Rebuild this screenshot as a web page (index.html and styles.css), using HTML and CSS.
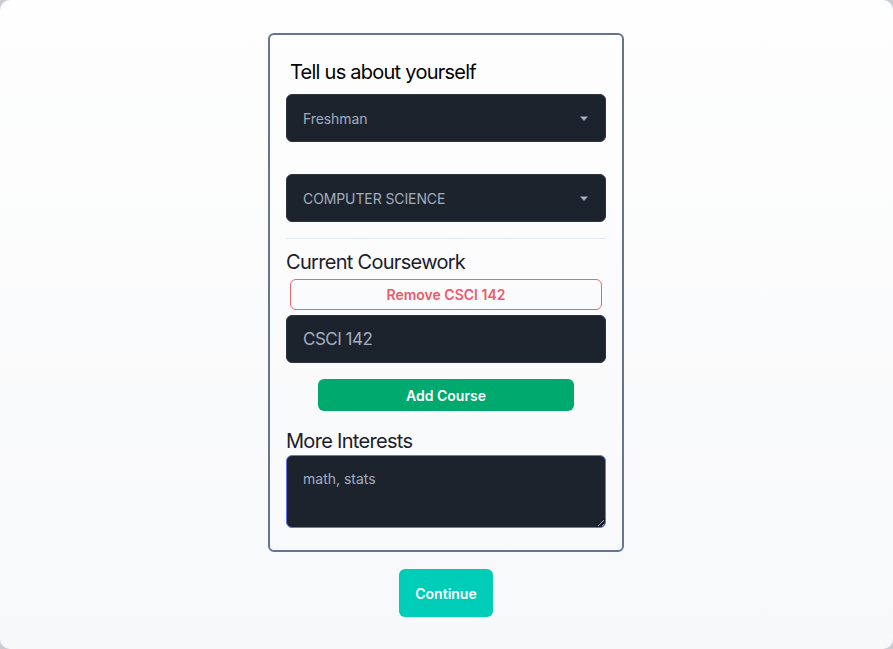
FILE: index.html
```html
<!DOCTYPE html>
<html lang="en">
<head>
<meta charset="utf-8">
<title>Tell us about yourself</title>
<link rel="stylesheet" href="styles.css">
</head>
<body>
<div class="app">
  <form class="card">
    <h2 class="title">Tell us about yourself</h2>
    <div class="select">
      <span class="select-value">Freshman</span>
      <svg class="caret" width="10" height="6" viewBox="0 0 10 6"><path d="M1 0.5h8L5 5z" fill="#a0aec0"/></svg>
    </div>
    <div class="select second">
      <span class="select-value">COMPUTER SCIENCE</span>
      <svg class="caret" width="10" height="6" viewBox="0 0 10 6"><path d="M1 0.5h8L5 5z" fill="#a0aec0"/></svg>
    </div>
    <hr class="divider">
    <h3 class="section">Current Coursework</h3>
    <button type="button" class="btn-remove">Remove CSCI 142</button>
    <input class="course-input" type="text" value="CSCI 142">
    <div class="add-row"><button type="button" class="btn-add">Add Course</button></div>
    <h3 class="section interests">More Interests</h3>
    <textarea class="interests-box">math, stats</textarea>
  </form>
  <button type="button" class="btn-continue">Continue</button>
</div>
</body>
</html>
```
FILE: styles.css
```css
html, body {
  margin: 0;
  padding: 0;
  height: 100%;
  background: #c9ccd1;
}
.app {
  box-sizing: border-box;
  height: 649px;
  border-radius: 10px;
  background: linear-gradient(#fefefe, #f7f8fa);
  display: flex;
  flex-direction: column;
  align-items: center;
  padding-top: 33px;
  font-family: Inter, "Noto Sans", sans-serif;
  overflow: hidden;
}
.card {
  box-sizing: border-box;
  width: 356px;
  margin-right: 1px;
  border: 2px solid #66758e;
  border-radius: 6px;
  padding: 23px 16px 22px;
  display: flex;
  flex-direction: column;
}
.title {
  margin: 0 0 8px 4px;
  font-size: 20px;
  line-height: 28px;
  font-weight: 400;
  letter-spacing: -0.75px;
  color: #000;
}
.select {
  box-sizing: border-box;
  height: 48px;
  border-radius: 6px;
  background: #1d232c;
  border: 1px solid #2d3440;
  display: flex;
  align-items: center;
  justify-content: space-between;
  padding: 0 16px 0 16px;
}
.select.second { margin-top: 32px; }
.select-value {
  font-size: 14px;
  letter-spacing: -0.1px;
  color: #a0aec0;
}
.caret { display: block; margin-top: 1px; }
.divider {
  margin: 16px 0 9px;
  border: 0;
  height: 1px;
  background: #e2e8f0;
}
.section {
  margin: 0;
  font-size: 20px;
  line-height: 28px;
  font-weight: 400;
  letter-spacing: -0.7px;
  color: #1a202c;
}
.btn-remove {
  box-sizing: border-box;
  margin: 3px 4px 0;
  height: 31px;
  border: 1px solid #f56565;
  border-radius: 6px;
  background: transparent;
  color: #f25767;
  font-family: Inter, "Noto Sans", sans-serif;
  font-size: 14px;
  font-weight: 600;
  cursor: pointer;
}
.course-input {
  box-sizing: border-box;
  margin-top: 5px;
  height: 48px;
  width: 100%;
  border-radius: 6px;
  background: #1d232c;
  border: 1px solid #2d3440;
  padding: 0 16px;
  font-family: Inter, "Noto Sans", sans-serif;
  font-size: 17px;
  letter-spacing: -0.5px;
  color: #a0aec0;
  outline: none;
}
.add-row {
  display: flex;
  justify-content: center;
  margin-top: 16px;
}
.btn-add {
  width: 256px;
  height: 32px;
  border: 0;
  border-radius: 6px;
  background: #00aa6e;
  color: #fff;
  font-family: Inter, "Noto Sans", sans-serif;
  font-size: 14px;
  font-weight: 600;
  cursor: pointer;
}
.section.interests {
  margin-top: 17px;
  line-height: 26px;
}
.interests-box {
  box-sizing: border-box;
  margin-top: 1px;
  height: 73px;
  width: 100%;
  border-radius: 6px;
  background: #1d232c;
  border: 1px solid #6672ee;
  padding: 13px 16px;
  font-family: Inter, "Noto Sans", sans-serif;
  font-size: 14px;
  line-height: 20px;
  color: #a0aec0;
  outline: none;
  color-scheme: dark;
}
.btn-continue {
  margin-top: 17px;
  margin-right: 1px;
  width: 94px;
  height: 48px;
  border: 0;
  border-radius: 6px;
  background: #00cdb8;
  color: #fff;
  font-family: Inter, "Noto Sans", sans-serif;
  font-size: 14px;
  font-weight: 600;
  cursor: pointer;
}
```
